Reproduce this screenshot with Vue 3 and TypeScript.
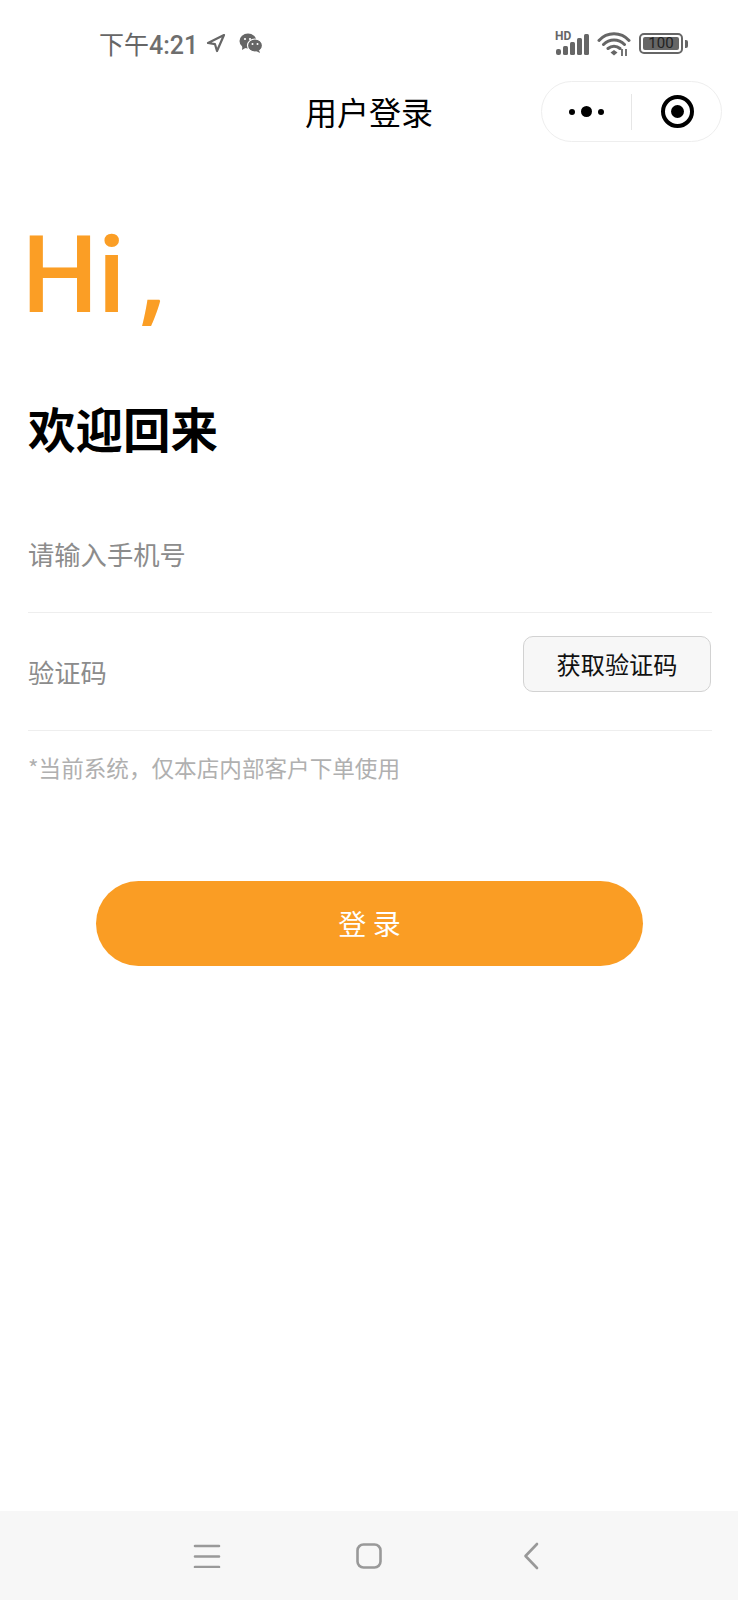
<template>
  <div class="page">
    <div class="status-bar">
      <div class="status-left">
        <span class="clock">下午<b>4:21</b></span>
        <svg class="loc" width="20" height="20" viewBox="0 0 20 20">
          <path d="M18 2 2 10l7 1.200L11 18z" fill="none" stroke="#666" stroke-width="2.200" stroke-linejoin="round" />
        </svg>
        <svg class="wechat" width="24" height="20" viewBox="0 0 24 20">
          <ellipse cx="9" cy="8" rx="8.500" ry="7.500" fill="#666" />
          <path d="M3.500 12 3 17l5-3z" fill="#666" />
          <ellipse cx="16" cy="12.500" rx="7.500" ry="6.500" fill="#666" stroke="#fff" stroke-width="1.200" />
          <path d="M20 17l1 3-4-2z" fill="#666" />
          <circle cx="6" cy="6" r="1.100" fill="#fff" />
          <circle cx="11" cy="6" r="1.100" fill="#fff" />
          <circle cx="13.500" cy="11" r="1" fill="#fff" />
          <circle cx="18.500" cy="11" r="1" fill="#fff" />
        </svg>
      </div>
      <div class="status-right">
        <div class="signal">
          <span class="hd">HD</span>
          <svg width="36" height="24" viewBox="0 0 36 24">
            <rect x="1" y="17" width="5" height="6" rx="2" fill="#666" />
            <rect x="8" y="14" width="5" height="9" rx="1.500" fill="#666" />
            <rect x="15" y="10" width="5" height="13" rx="1.500" fill="#666" />
            <rect x="22" y="6" width="5" height="17" rx="1.500" fill="#666" />
            <rect x="29" y="2" width="5" height="21" rx="1.500" fill="#666" />
          </svg>
        </div>
        <svg width="34" height="24" viewBox="0 0 34 24">
          <path d="M2 8.500C10-.5 24-.5 32 8.500M6.500 12.500C12.500 6.500 21.500 6.500 27.500 12.500M11 16.500c3.500-3 8.500-3 12 0" fill="none" stroke="#666" stroke-width="3" stroke-linecap="round" />
          <path d="M13.500 20.500l3.500-2.500 3.500 2.500-3.500 3z" fill="#666" />
          <path d="M25 17v7M29 17v7" stroke="#666" stroke-width="1.800" />
        </svg>
        <div class="battery">
          <div class="battery-body"><span class="battery-num">100</span></div>
          <div class="battery-tip"></div>
        </div>
      </div>
    </div>

    <div class="nav">
      <div class="nav-title">用户登录</div>
      <div class="capsule">
        <div class="capsule-dots">
          <i class="dot"></i><i class="dot big"></i><i class="dot"></i>
        </div>
        <div class="capsule-line"></div>
        <div class="capsule-target"><i></i></div>
      </div>
    </div>

    <div class="content">
      <div class="hi">Hi<span class="comma">,</span></div>
      <h1 class="welcome">欢迎回来</h1>

      <div class="field first">
        <span class="placeholder">请输入手机号</span>
      </div>
      <div class="field">
        <span class="placeholder">验证码</span>
        <button class="code-btn">获取验证码</button>
      </div>
      <p class="hint">*当前系统，仅本店内部客户下单使用</p>

      <button class="login-btn">登 录</button>
    </div>

    <div class="bottom-bar">
      <svg width="28" height="24" viewBox="0 0 28 24">
        <path d="M2 2h24M2 12.500h24M2 23h24" stroke="#999" stroke-width="2.600" stroke-linecap="round" fill="none" />
      </svg>
      <svg class="home" width="28" height="28" viewBox="0 0 28 28">
        <rect x="2.500" y="2.500" width="23" height="23" rx="6" fill="none" stroke="#999" stroke-width="2.600" />
      </svg>
      <svg class="back" width="16" height="28" viewBox="0 0 16 28">
        <path d="M14 2 2.500 14 14 26" fill="none" stroke="#999" stroke-width="2.600" stroke-linecap="round" stroke-linejoin="round" />
      </svg>
    </div>
  </div>
</template>

<script setup lang="ts">
</script>

<style>
html,
body {
  margin: 0;
  background: #fff;
}
</style>

<style scoped>
.page {
  width: 738px;
  height: 1600px;
  display: flex;
  flex-direction: column;
  background: #fff;
  font-family: "Noto Sans CJK SC", "Noto Sans", sans-serif;
  overflow: hidden;
}

.status-bar {
  height: 81px;
  flex: none;
  display: flex;
  justify-content: space-between;
  align-items: center;
  padding: 0 50px 0 99px;
  box-sizing: border-box;
}
.status-left,
.status-right {
  display: flex;
  align-items: center;
}
.status-left {
  margin-top: 4px;
}
.clock {
  font-size: 25px;
  color: #666;
}
.clock b {
  font-family: Roboto, sans-serif;
  font-weight: 500;
  color: #6e6e6e;
}
.loc {
  margin-left: 8px;
}
.wechat {
  margin-left: 13px;
}
.status-right {
  gap: 6px;
  margin-top: 6px;
}
.signal {
  position: relative;
  display: flex;
}
.hd {
  position: absolute;
  left: 0;
  top: -2px;
  font: 700 12px/12px Roboto, sans-serif;
  color: #666;
}
.battery {
  display: flex;
  align-items: center;
  margin-left: 2px;
}
.battery-body {
  width: 44px;
  height: 21px;
  box-sizing: border-box;
  border: 2px solid #666;
  border-radius: 5px;
  padding: 2px;
  display: flex;
}
.battery-num {
  flex: 1;
  background: #666;
  border-radius: 2px;
  color: #222;
  font: 15px/13px Roboto, sans-serif;
  text-align: center;
}
.battery-tip {
  width: 3px;
  height: 8px;
  margin-left: 2px;
  background: #666;
  border-radius: 0 2px 2px 0;
}

.nav {
  height: 60px;
  flex: none;
  position: relative;
  display: flex;
  justify-content: center;
  align-items: center;
}
.nav-title {
  font-size: 32px;
  color: #000;
}
.capsule {
  position: absolute;
  left: 541px;
  top: 0;
  width: 181px;
  height: 61px;
  box-sizing: border-box;
  border: 1px solid #eee;
  border-radius: 31px;
  display: flex;
  align-items: center;
}
.capsule-dots {
  width: 89px;
  display: flex;
  justify-content: center;
  align-items: center;
  gap: 6px;
}
.dot {
  width: 6px;
  height: 6px;
  background: #000;
  border-radius: 50%;
}
.dot.big {
  width: 11px;
  height: 11px;
}
.capsule-line {
  width: 1px;
  height: 36px;
  background: #e6e6e6;
}
.capsule-target {
  flex: 1;
  display: flex;
  justify-content: center;
  align-items: center;
  padding-left: 2px;
}
.capsule-target i {
  width: 33px;
  height: 33px;
  box-sizing: border-box;
  border: 4px solid #000;
  border-radius: 50%;
  display: flex;
  justify-content: center;
  align-items: center;
}
.capsule-target i::after {
  content: "";
  width: 13px;
  height: 13px;
  border-radius: 50%;
  background: #000;
}

.content {
  flex: 1;
  padding: 0 26px 0 28px;
  display: flex;
  flex-direction: column;
}
.hi {
  margin-top: 75px;
  height: 110px;
  font-family: Roboto, sans-serif;
  font-size: 107px;
  font-weight: 500;
  line-height: 110px;
  color: #fb9e25;
  margin-left: -6px;
}
.comma {
  font-family: "Open Sans", sans-serif;
  font-weight: 600;
  margin-left: 13px;
}
.welcome {
  margin: 72px 0 0;
  font-size: 47.500px;
  line-height: 60px;
  font-weight: 700;
  color: #000;
}
.field {
  height: 118px;
  box-sizing: border-box;
  border-bottom: 1px solid #eee;
  display: flex;
  justify-content: space-between;
  align-items: center;
}
.field.first {
  margin-top: 37px;
}
.placeholder {
  font-size: 26.300px;
  color: #8c8c8c;
}
.code-btn {
  width: 188px;
  height: 56px;
  margin: -16px 1px 0 0;
  box-sizing: border-box;
  border: 1px solid #d2d2d2;
  border-radius: 10px;
  background: #f7f7f7;
  color: #111;
  font-family: inherit;
  font-size: 24.200px;
  padding: 0;
}
.hint {
  margin: 22px 0 0;
  font-size: 22.600px;
  line-height: 30px;
  color: #b0b0b0;
}
.login-btn {
  width: 547px;
  height: 85px;
  margin: 98px 0 0 68px;
  border: 0;
  border-radius: 43px;
  background: #fa9d24;
  color: #fff;
  font-family: inherit;
  font-size: 28px;
  padding: 0 0 2px;
}

.bottom-bar {
  height: 89px;
  flex: none;
  background: #f7f7f7;
  display: flex;
  align-items: center;
  padding: 0 0 0 193px;
}
.home {
  margin-left: 134px;
}
.back {
  margin-left: 140px;
}
</style>
